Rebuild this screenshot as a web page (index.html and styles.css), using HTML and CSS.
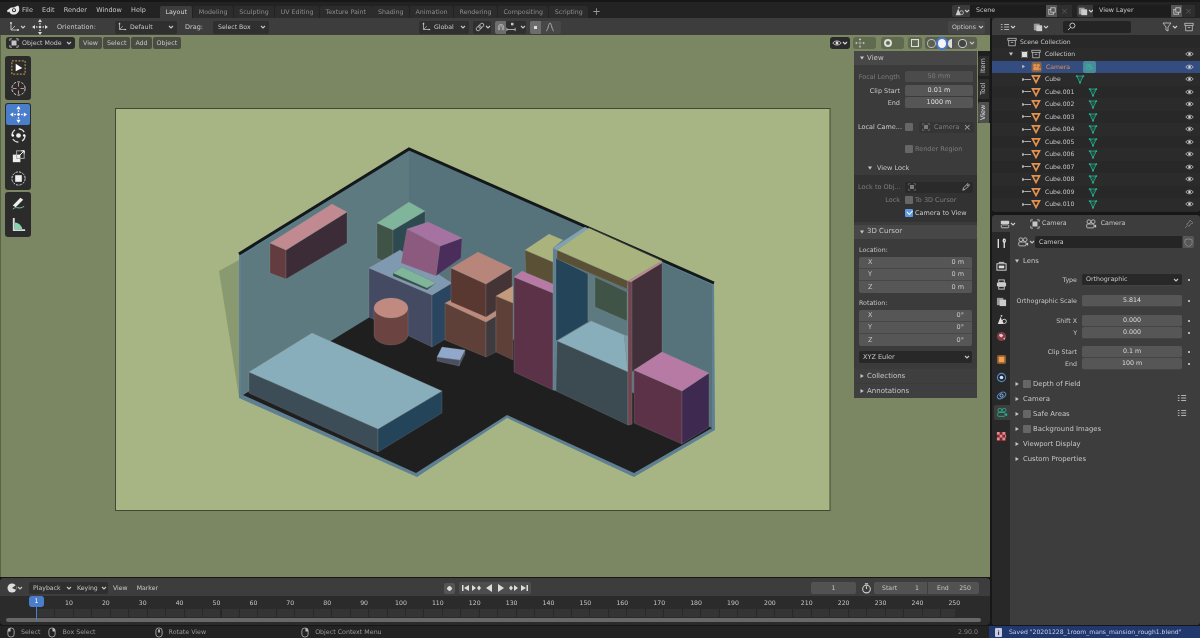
FILE: index.html
```html
<!DOCTYPE html>
<html lang="en">
<head>
<meta charset="utf-8">
<title>Blender</title>
<link rel="stylesheet" href="styles.css">
</head>
<body>
<svg class="defs" width="0" height="0" aria-hidden="true">
  <symbol id="logo" viewBox="0 0 14 12"><path d="M1 6.500 5 3.600 3 3.500h4.600L12 1.600c1 1 1.500 2.600 1.200 4.400-.4 2.400-2.400 4.400-5 4.600C5.600 10.800 3.700 9.400 3.300 7.500L1.800 8.600Z" fill="#e8e8e8"/><circle cx="8" cy="6.200" r="2" fill="#232323"/><circle cx="8" cy="6.200" r="1.100" fill="#e8e8e8"/></symbol>
  <symbol id="chev" viewBox="0 0 6 6"><path d="M1 2 3 4 5 2" fill="none" stroke="currentColor" stroke-width="1.100"/></symbol>
  <symbol id="trid" viewBox="0 0 6 6"><path d="M1 1.500H5L3 4.800Z" fill="currentColor"/></symbol>
  <symbol id="trir" viewBox="0 0 6 6"><path d="M1.500 1 4.800 3 1.500 5Z" fill="currentColor"/></symbol>
  <symbol id="mesh" viewBox="0 0 12 12"><path d="M1.800 2.300H10.200L6 10.200Z" fill="none" stroke="#e2924f" stroke-width="2"/></symbol>
  <symbol id="meshd" viewBox="0 0 12 12"><path d="M2 2.500H10L6 10.500Z" fill="none" stroke="#25b592" stroke-width="1"/><path d="M2 2.500 6 5.500 10 2.500M6 5.500V10.500" fill="none" stroke="#25b592" stroke-width=".5"/><circle cx="2" cy="2.500" r="1.100" fill="#25b592"/><circle cx="10" cy="2.500" r="1.100" fill="#25b592"/><circle cx="6" cy="10.500" r="1.100" fill="#25b592"/></symbol>
  <symbol id="cam" viewBox="0 0 14 12"><circle cx="4.500" cy="3.300" r="2.200" fill="none" stroke="currentColor"/><circle cx="9.500" cy="3.300" r="2.200" fill="none" stroke="currentColor"/><rect x="2" y="6" width="8.500" height="4.500" rx="1" fill="none" stroke="currentColor"/><path d="M10.500 8 13 6.500V10.500L10.500 9Z" fill="currentColor"/></symbol>
  <symbol id="camo" viewBox="0 0 12 12"><rect width="12" height="12" rx="2" fill="#8a6446"/><circle cx="4" cy="4" r="2" fill="#e2924f"/><circle cx="8" cy="4" r="2" fill="#e2924f"/><rect x="2" y="6" width="7" height="4" rx="1" fill="#e2924f"/><path d="M9 8 11 6.500V10L9 9Z" fill="#e2924f"/></symbol>
  <symbol id="eye" viewBox="0 0 12 10"><path d="M1 5C3 1.800 9 1.800 11 5 9 8.200 3 8.200 1 5Z" fill="none" stroke="currentColor"/><circle cx="6" cy="5" r="1.800" fill="currentColor"/></symbol>
  <symbol id="coll" viewBox="0 0 12 12"><rect x="1" y="1.500" width="10" height="2.500" fill="none" stroke="currentColor" stroke-width=".9"/><path d="M2 4V10.500H10V4M4.500 6.500H7.500" fill="none" stroke="currentColor" stroke-width=".9"/></symbol>
  <symbol id="mouse" viewBox="0 0 9 12"><rect x="1" y="1" width="7" height="10" rx="3" fill="none" stroke="currentColor" stroke-width=".9"/><path d="M1 5V4a3 3 0 0 1 3-3V5Z" fill="currentColor"/></symbol>
  <symbol id="mousem" viewBox="0 0 9 12"><rect x="1" y="1" width="7" height="10" rx="3" fill="none" stroke="currentColor" stroke-width=".9"/><rect x="3.500" y="2.500" width="2" height="3.500" fill="currentColor"/></symbol>
  <symbol id="mouser" viewBox="0 0 9 12"><rect x="1" y="1" width="7" height="10" rx="3" fill="none" stroke="currentColor" stroke-width=".9"/><path d="M8 5V4a3 3 0 0 0-3-3V5Z" fill="currentColor"/></symbol>
  <symbol id="move" viewBox="0 0 16 16"><g fill="currentColor"><path d="M8 0 10 3H6ZM8 16 6 13H10ZM0 8 3 6V10ZM16 8 13 10V6Z"/><circle cx="8" cy="8" r="1.300"/><rect x="7.400" y="4" width="1.200" height="1.500"/><rect x="7.400" y="10.500" width="1.200" height="1.500"/><rect x="4" y="7.400" width="1.500" height="1.200"/><rect x="10.500" y="7.400" width="1.500" height="1.200"/></g></symbol>
  <symbol id="cube" viewBox="0 0 12 12"><rect x="3" y="3" width="6" height="6" fill="currentColor"/><path d="M1 3.500V1H3.500M8.500 1H11V3.500M11 8.500V11H8.500M3.500 11H1V8.500" fill="none" stroke="currentColor"/></symbol>
  <symbol id="axis" viewBox="0 0 12 12"><path d="M3 1V9H11" fill="none" stroke="currentColor" stroke-width=".9"/><path d="M3 9 7 5" fill="none" stroke="currentColor" stroke-width=".8"/><circle cx="3" cy="2" r="1" fill="currentColor"/><circle cx="10" cy="9" r="1" fill="currentColor"/></symbol>
  <symbol id="dots" viewBox="0 0 12 12"><path d="M5 3H11M5 6H11M5 9H11M1 3H3M1 6H3M1 9H3" stroke="currentColor" fill="none" stroke-width="1"/></symbol>
  <symbol id="link" viewBox="0 0 12 12"><ellipse cx="4.500" cy="7.500" rx="3.500" ry="2.300" fill="none" stroke="currentColor" transform="rotate(-45 4.500 7.500)"/><ellipse cx="7.500" cy="4.500" rx="3.500" ry="2.300" fill="none" stroke="currentColor" transform="rotate(-45 7.500 4.500)"/></symbol>
  <symbol id="mag" viewBox="0 0 12 12"><path d="M2 10V6a4 4 0 0 1 8 0V10H8V6a2 2 0 0 0-4 0V10Z" fill="none" stroke="currentColor"/></symbol>
  <symbol id="snap" viewBox="0 0 12 12"><rect x="6" y="1" width="3" height="3" fill="currentColor"/><path d="M1 9H11M1 7V11M11 7V11" fill="none" stroke="currentColor"/></symbol>
  <symbol id="cpy" viewBox="0 0 10 10"><rect x="1" y="3" width="6" height="6" fill="none" stroke="currentColor"/><rect x="3.500" y="1" width="5.500" height="5.500" fill="#555" stroke="currentColor"/></symbol>
  <symbol id="scn" viewBox="0 0 12 12"><path d="M2 11 5 3 8 11Z" fill="currentColor"/><circle cx="9" cy="8" r="2.300" fill="none" stroke="currentColor"/><circle cx="6" cy="2" r="1" fill="currentColor"/></symbol>
  <symbol id="lay" viewBox="0 0 12 12"><rect x="1" y="2" width="7" height="8" fill="#999"/><rect x="4" y="4" width="7" height="7" fill="#ccc"/></symbol>
  <symbol id="edp" viewBox="0 0 12 12"><rect x="1" y="2" width="10" height="4" rx="1" fill="currentColor"/><rect x="1.500" y="7" width="9" height="3.500" rx="1" fill="none" stroke="currentColor"/></symbol>
  <symbol id="drop" viewBox="0 0 10 10"><path d="M1 9 2 6 6 2 8 4 4 8ZM6 2 7.500 .7 9.300 2.500 8 4" fill="none" stroke="currentColor"/></symbol>
</svg>

<div class="app">
  <header class="topbar">
    <svg class="logo"><use href="#logo"/></svg>
    <nav class="menus"><span>File</span><span>Edit</span><span>Render</span><span>Window</span><span>Help</span></nav>
    <nav class="tabs">
      <span class="tab on">Layout</span><span class="tab">Modeling</span><span class="tab">Sculpting</span><span class="tab">UV Editing</span><span class="tab">Texture Paint</span><span class="tab">Shading</span><span class="tab">Animation</span><span class="tab">Rendering</span><span class="tab">Compositing</span><span class="tab">Scripting</span><span class="plus">+</span>
    </nav>
    <div class="scene-box">
      <span class="sel-ic"><svg class="i10"><use href="#scn"/></svg><svg class="i6"><use href="#chev"/></svg></span>
      <span class="name">Scene</span>
      <span class="copy"><svg class="i8"><use href="#cpy"/></svg></span><span class="cross">×</span>
    </div>
    <div class="scene-box layer-box">
      <span class="sel-ic"><svg class="i10"><use href="#lay"/></svg><svg class="i6"><use href="#chev"/></svg></span>
      <span class="name">View Layer</span>
      <span class="copy"><svg class="i8"><use href="#cpy"/></svg></span><span class="cross">×</span>
    </div>
  </header>

  <div class="work">
    <div class="left">
      <div class="toolbar">
        <span class="tb-ed"><svg class="i12"><use href="#axis"/></svg><svg class="i6"><use href="#chev"/></svg></span>
        <svg class="tb-move"><use href="#move"/></svg>
        <span class="tb-orient">Orientation:</span>
        <span class="dd dd-default"><svg class="i10"><use href="#axis"/></svg><span>Default</span><svg class="i6 end"><use href="#chev"/></svg></span>
        <span class="tb-drag">Drag:</span>
        <span class="dd dd-box"><span>Select Box</span><svg class="i6 end"><use href="#chev"/></svg></span>
        <span class="dd dd-global"><svg class="i10"><use href="#axis"/></svg><span>Global</span><svg class="i6 end"><use href="#chev"/></svg></span>
        <span class="dd dd-link"><svg class="i10"><use href="#link"/></svg><svg class="i6 end"><use href="#chev"/></svg></span>
        <span class="dd dd-snap"><span class="snap-mag"><svg class="i8"><use href="#mag"/></svg></span><svg class="i10"><use href="#snap"/></svg><svg class="i6 end"><use href="#chev"/></svg></span>
        <span class="dd dd-prop"><span class="prop-dot"></span><svg class="i10 prop-curve" viewBox="0 0 10 10"><path d="M1 9C3 9 3.500 1 5 1S7 9 9 9" fill="none" stroke="#aaa"/></svg></span>
        <span class="dd dd-opt"><span>Options</span><svg class="i6 end"><use href="#chev"/></svg></span>
      </div>

      <main class="viewport">
        <svg class="scene" viewBox="0 35 990 543">
          <rect x="115.500" y="108.500" width="714.500" height="402" fill="#a6b583" stroke="#3f4a33"/>
          <polygon points="219,271 239,260 239,397" fill="#8a9a70"/>
          <polygon points="239,253 409,148 714,283 715,430 634,477 507,418 417,477 239,398" fill="#5e8092"/>
          <polygon points="241,256 409,150 409,296 241,395" fill="#5d7a80"/>
          <polygon points="409,150 712,285 712,430 409,296" fill="#56727b"/>
          <polygon points="243,395 409,293 712,428 634,473 507,415 416,473" fill="#1f1f1f"/>
          <polyline points="239,254 409,149 714,283" fill="none" stroke="#14181a" stroke-width="3"/>
          <g stroke="#9a9a9a" stroke-opacity=".35" stroke-width=".6">
            <polygon points="270,243 286,250 286,279 270,273" fill="#623c3f"/>
            <polygon points="286,250 347,212 347,243 286,279" fill="#3c2c38"/>
            <polygon points="270,243 332,204 347,212 286,250" fill="#c08a90"/>

            <polygon points="377,223 393,230 393,265 377,258" fill="#3f5346"/>
            <polygon points="393,230 425,211 425,240 393,265" fill="#2c4a50"/>
            <polygon points="377,223 409,202 425,211 393,230" fill="#7fb59a"/>

            <polygon points="369,268 432,295 432,347 369,317" fill="#454a63"/>
            <polygon points="432,295 452,283 452,335 432,347" fill="#2a4560"/>
            <polygon points="369,268 400,250 452,283 432,295" fill="#7f9ab0"/>

            <polygon points="407,229 440,246 436,276 401,263" fill="#8b5a7e"/>
            <polygon points="440,246 462,238 461,258 436,276" fill="#4a2d5a"/>
            <polygon points="407,229 428,222 462,238 440,246" fill="#a672a2"/>
            <polygon points="393,273 402,267 436,283 427,290 393,276" fill="#35504a"/>
            <polygon points="393,273 402,267 436,283 427,288" fill="#7fb59a"/>

            <path d="M374 308V335A17 10 0 0 0 408 335V308Z" fill="#6b4340"/>
            <ellipse cx="391" cy="308" rx="17" ry="10" fill="#c08a80"/>

            <polygon points="249,372 378,429 378,452 249,393" fill="#3c4d58"/>
            <polygon points="378,429 442,391 442,413 378,452" fill="#24445a"/>
            <polygon points="249,372 312,333 442,391 378,429" fill="#88aebb"/>

            <polygon points="437,357 460,360 459,366 437,361" fill="#4a5060"/>
            <polygon points="460,360 465,350 465,354 459,366" fill="#4a5060"/>
            <polygon points="442,347 465,350 460,360 437,357" fill="#8fa8cc"/>

            <polygon points="445,303 486,322 486,357 445,340" fill="#5e4038"/>
            <polygon points="486,322 496,316 496,352 486,357" fill="#3f3a3e"/>
            <polygon points="445,303 451,300 486,317 496,311 496,316 486,322" fill="#c08a7a"/>
            <polygon points="451,268 486,284 486,317 451,302" fill="#5a3832"/>
            <polygon points="486,284 512,268 512,300 486,317" fill="#453436"/>
            <polygon points="451,268 478,252 512,268 486,284" fill="#b8857a"/>

            <polygon points="496,296 513,303 513,360 496,352" fill="#5e4038"/>
            <polygon points="496,296 513,286 513,303" fill="#c49a7c"/>

            <polygon points="525,250 553,262 553,290 526,276" fill="#5a5035"/>
            <polygon points="525,250 549,234 563,240 553,248 553,262" fill="#aab37c"/>
            <polygon points="514,277 553,293 553,390 514,372" fill="#5c3248"/>
            <polygon points="514,277 522,271 553,284 553,293" fill="#b67aa5"/>

            <polygon points="553,248 557,250 557,391 553,390" fill="#5e8092"/>
            <polygon points="553,248 585,227 589,229 557,250" fill="#7fa3b5"/>
            <polygon points="556,258 588,274 588,322 556,341" fill="#24445a"/>
            <polygon points="588,274 628,292 628,338 588,320" fill="#5d7a80"/>
            <polygon points="595,277 627,292 627,321 595,307" fill="#3f5346"/>
            <polygon points="557,341 591,321 624,335 628,372" fill="#88aebb"/>
            <polygon points="624,335 628,336 628,372" fill="#7a9da9"/>
            <polygon points="557,341 628,372 628,425 556,391" fill="#3c4a52"/>
            <polygon points="557,250 628,281 627,289 557,259" fill="#5a5035"/>
            <polygon points="628,281 662,261 662,352 632,372 632,424 628,425" fill="#41303a"/>
            <polygon points="628,281 632,279 632,424 628,425" fill="#6f4650"/>
            <polygon points="557,250 589,228 662,261 628,281" fill="#a9b37d"/>
            <polygon points="628,281 662,261 662,263 631,282" fill="#c08a90"/>

            <polygon points="634,370 682,391 682,444 634,423" fill="#5c3248"/>
            <polygon points="682,391 709,373 709,427 682,444" fill="#3e2a50"/>
            <polygon points="634,370 662,352 709,373 682,391" fill="#b67aa5"/>
          </g>
          <line x1="589" y1="227.500" x2="662" y2="260.500" stroke="#3a4238" stroke-width=".8"/>
        </svg>

        <div class="vp-header">
          <span class="mode"><svg class="i10"><use href="#cube"/></svg><span>Object Mode</span><svg class="i6 end"><use href="#chev"/></svg></span>
          <div class="vp-menu"><span>View</span><span>Select</span><span>Add</span><span>Object</span></div>
        </div>

        <div class="gizmos">
          <span class="gz gz-view"><svg class="i10"><use href="#eye"/></svg><svg class="i6"><use href="#chev"/></svg></span>
          <span class="gz gz-gizmo"><svg class="i10"><use href="#move"/></svg></span>
          <span class="gz gz-over"><span class="over-ball"></span></span>
          <span class="gz gz-xray"><span class="xray"></span></span>
          <span class="gz gz-shade"><span class="ball wire"></span><span class="ball solid"></span><span class="ball mat"></span><span class="ball rend"></span><svg class="i6"><use href="#chev"/></svg></span>
        </div>

        <div class="tools">
          <div class="tool-group">
            <span class="tool"><svg viewBox="0 0 18 18"><rect x="2" y="2" width="14" height="14" fill="none" stroke="#d8b05c" stroke-dasharray="2 1.500"/><path d="M6 5 13 9.500 6 13Z" fill="#fff"/></svg></span>
            <span class="tool"><svg viewBox="0 0 18 18"><circle cx="9" cy="9" r="7" fill="none" stroke="#ddd" stroke-dasharray="3 1.500"/><path d="M9 3V7M9 11V15M3 9H7M11 9H15" stroke="#c98" fill="none"/></svg></span>
          </div>
          <div class="tool-group">
            <span class="tool on"><svg viewBox="0 0 16 16"><use href="#move"/></svg></span>
            <span class="tool"><svg viewBox="0 0 18 18"><circle cx="9" cy="9" r="7" fill="none" stroke="#ddd" stroke-width="1.200" stroke-dasharray="7 4"/><circle cx="3" cy="9" r="1.300" fill="#fff"/><circle cx="15" cy="9" r="1.300" fill="#fff"/><circle cx="9" cy="9" r="2.500" fill="#eee"/></svg></span>
            <span class="tool"><svg viewBox="0 0 18 18"><rect x="3" y="7" width="8" height="8" fill="#eee"/><rect x="7" y="3" width="8" height="8" fill="none" stroke="#aaa"/><path d="M10 8 15 3M12 3H15V6" stroke="#fff" fill="none"/></svg></span>
            <span class="tool"><svg viewBox="0 0 18 18"><circle cx="9" cy="9" r="7" fill="none" stroke="#ddd" stroke-dasharray="2.500 1.200"/><rect x="5.500" y="5.500" width="7" height="7" fill="#eee"/></svg></span>
          </div>
          <div class="tool-group">
            <span class="tool"><svg viewBox="0 0 18 18"><path d="M3 11 11 3 14 5 6 13Z" fill="#eee"/><path d="M3 15C7 11 9 16 15 12" fill="none" stroke="#7fc7a5"/></svg></span>
            <span class="tool"><svg viewBox="0 0 18 18"><path d="M4 2V15H16" fill="none" stroke="#ddd" stroke-width="2"/><path d="M5 14V7A8 8 0 0 1 13 14Z" fill="#86d3b0"/></svg></span>
          </div>
        </div>

        <aside class="npanel">
          <div class="np-main">
            <div class="ph"><svg class="i6"><use href="#trid"/></svg><span>View</span></div>
            <div class="pb pb-view">
              <div class="fr dim"><label>Focal Length</label><span class="fld center">50 mm</span></div>
              <div class="fr fr-gap"><label>Clip Start</label><span class="fld center">0.01 m</span></div>
              <div class="fr"><label>End</label><span class="fld center">1000 m</span></div>
              <div class="fr local"><label>Local Came...</label><span class="cb"></span><span class="obj dim"><svg class="i8"><use href="#cube"/></svg><span>Camera</span><em>×</em></span></div>
              <div class="fr render-r dim"><label></label><span class="chk"><span class="cb"></span>Render Region</span></div>
              <div class="sub-h"><svg class="i6"><use href="#trid"/></svg><span>View Lock</span></div>
              <div class="sub-b">
                <div class="fr dim"><label>Lock to Obj...</label><span class="obj dark"><svg class="i8"><use href="#cube"/></svg><svg class="i8 drop"><use href="#drop"/></svg></span></div>
                <div class="fr dim"><label>Lock</label><span class="chk"><span class="cb"></span>To 3D Cursor</span></div>
                <div class="fr"><label></label><span class="chk"><span class="cb on"></span>Camera to View</span></div>
              </div>
            </div>
            <div class="ph ph-cursor"><svg class="i6"><use href="#trid"/></svg><span>3D Cursor</span></div>
            <div class="pb pb-cursor">
              <div class="cap">Location:</div>
              <div class="vec"><span><b>X</b><i>0 m</i></span><span><b>Y</b><i>0 m</i></span><span><b>Z</b><i>0 m</i></span></div>
              <div class="cap cap2">Rotation:</div>
              <div class="vec"><span><b>X</b><i>0°</i></span><span><b>Y</b><i>0°</i></span><span><b>Z</b><i>0°</i></span></div>
              <div class="euler"><span>XYZ Euler</span><svg class="i6"><use href="#chev"/></svg></div>
            </div>
            <div class="ph ph-col"><svg class="i6"><use href="#trir"/></svg><span>Collections</span></div>
            <div class="ph ph-ann"><svg class="i6"><use href="#trir"/></svg><span>Annotations</span></div>
          </div>
          <div class="np-tabs"><span>Item</span><span class="tool-tab">Tool</span><span class="view-tab">View</span></div>
        </aside>
      </main>

      <section class="timeline">
        <div class="tl-head">
          <span class="tl-ed"><svg class="i10" viewBox="0 0 10 10"><circle cx="5" cy="5" r="4.500" fill="#ddd"/><path d="M5 5 9 2 9.500 7Z" fill="#3d3d3d"/></svg><svg class="i6"><use href="#chev"/></svg></span>
          <span class="tl-dd tl-play">Playback<svg class="i6"><use href="#chev"/></svg></span>
          <span class="tl-dd tl-key">Keying<svg class="i6"><use href="#chev"/></svg></span>
          <span class="tl-menu">View</span><span class="tl-menu tl-marker">Marker</span>
          <div class="tl-ctrl">
            <span class="rec"></span>
            <span class="ctrl">
              <svg viewBox="0 0 10 10"><path d="M2 2H3.500V8H2ZM9 2V8L4 5Z" fill="#ddd"/></svg>
              <svg viewBox="0 0 10 10"><path d="M0 2V8L4 5ZM5 5 7 2.500 9 5 7 7.500Z" fill="#ddd"/></svg>
              <svg viewBox="0 0 10 10"><path d="M8 1V9L2 5Z" fill="#ddd"/></svg>
              <svg viewBox="0 0 10 10"><path d="M2 1V9L8 5Z" fill="#ddd"/></svg>
              <svg viewBox="0 0 10 10"><path d="M1 5 3 2.500 5 5 3 7.500ZM6 2V8L10 5Z" fill="#ddd"/></svg>
              <svg viewBox="0 0 10 10"><path d="M1 2V8L6 5ZM6.500 2H8V8H6.500Z" fill="#ddd"/></svg>
            </span>
          </div>
          <div class="tl-range">
            <span class="frame">1</span>
            <svg class="timer" viewBox="0 0 10 10"><circle cx="5" cy="5.500" r="3.500" fill="none" stroke="#ccc"/><path d="M3.500 .8H6.500M5 3V5.500" stroke="#ccc" fill="none"/></svg>
            <span class="rng rng-s"><b>Start</b><i>1</i></span><span class="rng rng-e"><b>End</b><i>250</i></span>
          </div>
        </div>
        <div class="ruler">
          <span class="cur">1</span>
          <span>10</span><span>20</span><span>30</span><span>40</span><span>50</span><span>60</span><span>70</span><span>80</span><span>90</span><span>100</span><span>110</span><span>120</span><span>130</span><span>140</span><span>150</span><span>160</span><span>170</span><span>180</span><span>190</span><span>200</span><span>210</span><span>220</span><span>230</span><span>240</span><span>250</span>
        </div>
        <div class="track"><span class="cur-line"></span></div>
        <div class="scroll"><span></span></div>
      </section>
    </div>

    <div class="right">
      <section class="outliner">
        <div class="ol-head">
          <span class="ol-ed"><svg class="i10"><use href="#dots"/></svg><svg class="i6"><use href="#chev"/></svg></span>
          <span class="ol-ed ol-ed2"><svg class="i10"><use href="#lay"/></svg><svg class="i6"><use href="#chev"/></svg></span>
          <span class="search"><svg viewBox="0 0 10 10"><circle cx="6" cy="4" r="2.800" fill="none" stroke="#ccc"/><path d="M4 6 1 9" stroke="#ccc"/></svg></span>
          <span class="filter"><svg class="i10" viewBox="0 0 10 10"><path d="M1 1H9L6 5V9L4 8V5Z" fill="none" stroke="#ccc" stroke-width=".8"/></svg><svg class="i6"><use href="#chev"/></svg></span>
          <span class="newc"><svg class="i10"><use href="#coll"/></svg></span>
        </div>
        <div class="ol-list">
          <div class="row r-scene"><svg class="i10"><use href="#coll"/></svg><span>Scene Collection</span></div>
          <div class="row r-coll alt"><svg class="i6"><use href="#trid"/></svg><span class="cb on2"></span><svg class="i10"><use href="#coll"/></svg><span>Collection</span><svg class="eye"><use href="#eye"/></svg></div>
          <div class="row item sel"><svg class="i6"><use href="#trir"/></svg><svg class="oi"><use href="#camo"/></svg><span class="t-cam">Camera</span><span class="cam-data"><svg class="i8"><use href="#cam"/></svg></span><svg class="eye"><use href="#eye"/></svg></div>
          <div class="row item alt"><svg class="i6"><use href="#trir"/></svg><i class="ln"></i><svg class="oi"><use href="#mesh"/></svg><span>Cube</span><svg class="gi"><use href="#meshd"/></svg><svg class="eye"><use href="#eye"/></svg></div>
          <div class="row item"><svg class="i6"><use href="#trir"/></svg><i class="ln"></i><svg class="oi"><use href="#mesh"/></svg><span>Cube.001</span><svg class="gi"><use href="#meshd"/></svg><svg class="eye"><use href="#eye"/></svg></div>
          <div class="row item alt"><svg class="i6"><use href="#trir"/></svg><i class="ln"></i><svg class="oi"><use href="#mesh"/></svg><span>Cube.002</span><svg class="gi"><use href="#meshd"/></svg><svg class="eye"><use href="#eye"/></svg></div>
          <div class="row item"><svg class="i6"><use href="#trir"/></svg><i class="ln"></i><svg class="oi"><use href="#mesh"/></svg><span>Cube.003</span><svg class="gi"><use href="#meshd"/></svg><svg class="eye"><use href="#eye"/></svg></div>
          <div class="row item alt"><svg class="i6"><use href="#trir"/></svg><i class="ln"></i><svg class="oi"><use href="#mesh"/></svg><span>Cube.004</span><svg class="gi"><use href="#meshd"/></svg><svg class="eye"><use href="#eye"/></svg></div>
          <div class="row item"><svg class="i6"><use href="#trir"/></svg><i class="ln"></i><svg class="oi"><use href="#mesh"/></svg><span>Cube.005</span><svg class="gi"><use href="#meshd"/></svg><svg class="eye"><use href="#eye"/></svg></div>
          <div class="row item alt"><svg class="i6"><use href="#trir"/></svg><i class="ln"></i><svg class="oi"><use href="#mesh"/></svg><span>Cube.006</span><svg class="gi"><use href="#meshd"/></svg><svg class="eye"><use href="#eye"/></svg></div>
          <div class="row item"><svg class="i6"><use href="#trir"/></svg><i class="ln"></i><svg class="oi"><use href="#mesh"/></svg><span>Cube.007</span><svg class="gi"><use href="#meshd"/></svg><svg class="eye"><use href="#eye"/></svg></div>
          <div class="row item alt"><svg class="i6"><use href="#trir"/></svg><i class="ln"></i><svg class="oi"><use href="#mesh"/></svg><span>Cube.008</span><svg class="gi"><use href="#meshd"/></svg><svg class="eye"><use href="#eye"/></svg></div>
          <div class="row item"><svg class="i6"><use href="#trir"/></svg><i class="ln"></i><svg class="oi"><use href="#mesh"/></svg><span>Cube.009</span><svg class="gi"><use href="#meshd"/></svg><svg class="eye"><use href="#eye"/></svg></div>
          <div class="row item alt"><svg class="i6"><use href="#trir"/></svg><i class="ln"></i><svg class="oi"><use href="#mesh"/></svg><span>Cube.010</span><svg class="gi"><use href="#meshd"/></svg><svg class="eye"><use href="#eye"/></svg></div>
        </div>
      </section>

      <section class="props">
        <div class="pr-head">
          <span class="ol-ed pr-ed"><svg class="i10"><use href="#edp"/></svg><svg class="i6"><use href="#chev"/></svg></span>
          <svg class="i10 pr-ic1"><use href="#cube"/></svg><span>Camera</span>
          <svg class="i12 pr-ic2"><use href="#cam"/></svg><span>Camera</span>
          <svg class="i10 pin" viewBox="0 0 10 10"><path d="M6 1 9 4 6.500 5 5 7.500 2.500 5 5 3.500ZM3.500 6.500 1 9" fill="none" stroke="#777"/></svg>
        </div>
        <div class="pr-body">
          <div class="pr-tabs">
            <svg class="ptab p-tool" viewBox="0 0 12 12"><path d="M2.500 1V11M9 1C7.500 2 7.500 4 9 5V11M9 5C10.500 4 10.500 2 9 1" fill="none" stroke="#ddd" stroke-width="1.500"/></svg>
            <svg class="ptab" viewBox="0 0 12 12"><rect x="1" y="3" width="10" height="7" fill="none" stroke="#ddd"/><rect x="3" y="5" width="6" height="3" fill="#ddd"/><path d="M3 1.500H9" stroke="#ddd"/></svg>
            <svg class="ptab" viewBox="0 0 12 12"><rect x="1" y="4" width="10" height="4" fill="#ccc"/><rect x="3" y="1" width="6" height="3" fill="none" stroke="#ccc"/><rect x="3" y="8" width="6" height="3" fill="none" stroke="#ccc"/></svg>
            <svg class="ptab" viewBox="0 0 12 12"><use href="#lay"/></svg>
            <svg class="ptab p-scn" viewBox="0 0 12 12"><use href="#scn"/></svg>
            <svg class="ptab" viewBox="0 0 12 12"><circle cx="6" cy="6" r="5" fill="#8b3a3f"/><path d="M3 4 6 3 8 5 6 7 4 6ZM8 8 10 7 9 10Z" fill="#c9d0da"/></svg>
            <svg class="ptab gap" viewBox="0 0 12 12"><rect x="1" y="1" width="10" height="10" rx="2" fill="#8a5c32"/><rect x="3" y="3" width="6" height="6" fill="#f0a050"/></svg>
            <svg class="ptab" viewBox="0 0 12 12"><circle cx="6" cy="6" r="4.500" fill="none" stroke="#4f8bd0" stroke-width="1.200"/><circle cx="6" cy="6" r="2" fill="#cfe0f5"/></svg>
            <svg class="ptab" viewBox="0 0 12 12"><ellipse cx="6" cy="6" rx="5" ry="3" fill="none" stroke="#4f8bd0" stroke-width="1.200" transform="rotate(-30 6 6)"/><circle cx="6" cy="6" r="1.700" fill="none" stroke="#a8c8ee"/></svg>
            <span class="ptab-on"><svg viewBox="0 0 14 12"><use href="#cam"/></svg></span>
            <svg class="ptab gap" viewBox="0 0 12 12"><rect x="1" y="1" width="10" height="10" fill="#7c2a30"/><path d="M1 1H4V4H1ZM7 1H10V4H7ZM4 4H7V7H4ZM10 4H11V7H10ZM1 7H4V10H1ZM7 7H10V10H7Z" fill="#e08a90"/></svg>
          </div>
          <div class="pr-main">
            <div class="data-row">
              <span class="data-ic"><svg class="i12"><use href="#cam"/></svg><svg class="i6"><use href="#chev"/></svg></span>
              <span class="data-name">Camera</span>
              <span class="data-sh"><svg viewBox="0 0 10 10"><path d="M1 2 5 1 9 2V5C9 7 7 9 5 9.500 3 9 1 7 1 5Z" fill="none" stroke="#888"/></svg></span>
            </div>
            <div class="pp-h lens"><svg class="i6"><use href="#trid"/></svg><span>Lens</span></div>
            <div class="pf type"><label>Type</label><span class="f dark">Orthographic<svg class="i6"><use href="#chev"/></svg></span><i></i></div>
            <div class="pf ortho"><label>Orthographic Scale</label><span class="f">5.814</span><i></i></div>
            <div class="pf shift"><label>Shift X</label><span class="f">0.000</span><i></i></div>
            <div class="pf"><label>Y</label><span class="f">0.000</span><i></i></div>
            <div class="pf clip"><label>Clip Start</label><span class="f">0.1 m</span><i></i></div>
            <div class="pf"><label>End</label><span class="f">100 m</span><i></i></div>
            <div class="pp-list">
              <div class="pp-h"><svg class="i6"><use href="#trir"/></svg><span class="cb"></span><span>Depth of Field</span></div>
              <div class="pp-h"><svg class="i6"><use href="#trir"/></svg><span>Camera</span><svg class="lst"><use href="#dots"/></svg></div>
              <div class="pp-h"><svg class="i6"><use href="#trir"/></svg><span class="cb"></span><span>Safe Areas</span><svg class="lst"><use href="#dots"/></svg></div>
              <div class="pp-h"><svg class="i6"><use href="#trir"/></svg><span class="cb"></span><span>Background Images</span></div>
              <div class="pp-h"><svg class="i6"><use href="#trir"/></svg><span>Viewport Display</span></div>
              <div class="pp-h"><svg class="i6"><use href="#trir"/></svg><span>Custom Properties</span></div>
            </div>
          </div>
        </div>
      </section>
    </div>
  </div>

  <footer class="status">
    <svg class="ms"><use href="#mouse"/></svg><span class="s1">Select</span>
    <svg class="ms m2"><use href="#mouser"/></svg><span class="s2">Box Select</span>
    <svg class="ms m3"><use href="#mousem"/></svg><span class="s2">Rotate View</span>
    <svg class="ms m4"><use href="#mouser"/></svg><span class="s2">Object Context Menu</span>
    <span class="ver">2.90.0</span>
    <span class="report"><b>i</b><span>Saved "20201228_1room_mans_mansion_rough1.blend"</span></span>
  </footer>
</div>
</body>
</html>
```
FILE: styles.css
```css
* { box-sizing: border-box; }
html, body { margin: 0; height: 100%; }
body { background: #fff; overflow: hidden; font: 6.300px/1 "DejaVu Sans", sans-serif; color: #c6c6c6; }
.defs { position: absolute; }
svg { display: block; flex: none; }
i, em { font-style: normal; }
b { font-weight: normal; }
.i6 { width: 6px; height: 6px; }
.i8 { width: 8px; height: 8px; }
.i10 { width: 10px; height: 10px; }
.i12 { width: 12px; height: 12px; }
.end { margin-left: auto; }

.app { height: 638px; padding-top: 2px; display: flex; flex-direction: column; background: #171717; filter: blur(.3px); }

.topbar { height: 16px; flex: none; background: #232323; display: flex; align-items: center; }
.logo { width: 14px; height: 12px; margin-left: 6px; }
.menus { display: flex; margin-left: 2px; gap: 9.200px; font-size: 6.500px; padding-top: 1px; width: 138px; }
.tabs { display: flex; align-self: flex-end; height: 12px; }
.tab { height: 12px; padding: 0 5.500px; margin-right: .9px; display: flex; align-items: center; color: #8c8c8c; background: #2c2c2c; border-radius: 2px 2px 0 0; }
.tab.on { background: #3d3d3d; color: #d5d5d5; }
.plus { margin-left: 3px; font-size: 10px; line-height: 12px; color: #999; }
.scene-box { display: flex; align-items: center; height: 12px; margin-left: auto; margin-top: 1px; width: 120px; }
.layer-box { margin-left: 5px; width: 118px; margin-right: 5px; }
.sel-ic { display: flex; align-items: center; width: 18px; height: 12px; background: #3a3a3a; padding-left: 2px; border-radius: 2px 0 0 2px; color: #ccc; }
.layer-box .sel-ic { width: 16px; padding-left: 1px; }
.name { flex: 1; height: 12px; background: #1d1d1d; display: flex; align-items: center; padding-left: 6px; }
.copy { width: 11px; height: 12px; background: #555; display: flex; align-items: center; justify-content: center; color: #ccc; }
.cross { width: 15px; text-align: center; color: #555; font-size: 9px; line-height: 12px; background: #2e2e2e; }
.layer-box .cross { width: 13px; }

.work { flex: 1; display: flex; min-height: 0; }
.left { width: 990px; flex: none; display: flex; flex-direction: column; }
.right { flex: 1; margin-left: 2px; display: flex; flex-direction: column; gap: 3px; }

.toolbar { height: 17px; flex: none; background: #3d3d3d; display: flex; align-items: center; padding-top: 1px; }
.tb-ed { display: flex; align-items: center; margin-left: 8px; width: 22px; color: #ccc; }
.tb-move { width: 16px; height: 16px; margin-left: 2px; color: #ddd; }
.tb-orient { margin-left: 9px; font-size: 6.500px; width: 38px; }
.dd { height: 13px; display: flex; align-items: center; background: #2f2f2f; border-radius: 2px; padding: 0 3px 0 2px; gap: 3px; font-size: 6.200px; }
.dd-default { margin-left: 20px; width: 62px; }
.tb-drag { margin-left: 8px; width: 16px; font-size: 6.500px; }
.dd-box { margin-left: 12px; width: 56px; padding-left: 5px; }
.dd-global { margin-left: 150px; width: 50px; }
.dd-link { margin-left: 4px; width: 18px; padding: 0 1px 0 2px; gap: 0; }
.dd-snap { margin-left: 4px; width: 31px; gap: 0; padding: 0; }
.snap-mag { width: 11px; height: 13px; background: #6d6d6d; border-radius: 2px 0 0 2px; display: flex; align-items: center; justify-content: center; }
.dd-prop { margin-left: 4px; width: 31px; gap: 4px; padding: 0; background: #474747; }
.prop-dot { width: 11px; height: 13px; background: radial-gradient(circle, #ddd 1.500px, #6d6d6d 2px); border-radius: 2px 0 0 2px; }
.dd-opt { margin-left: auto; margin-right: 5px; width: 37px; padding: 0 2px 0 4px; background: #464646; gap: 2px; }

.viewport { position: relative; flex: 1; min-height: 0; background: #7a8762; overflow: hidden; border-left: 1px solid #586247; }
.scene { position: absolute; left: -1px; top: 0; width: 990px; height: 543px; }

.vp-header { position: absolute; top: 2px; left: 5px; display: flex; gap: 4px; height: 12px; white-space: nowrap; }
.mode { width: 69px; display: flex; align-items: center; gap: 3px; background: #2c2c2c; border-radius: 3px; padding: 0 3px; }
.vp-menu { display: flex; gap: 1px; }
.vp-menu span { padding: 0 4px; display: flex; align-items: center; background: #484c41; border-radius: 2px; }

.gizmos { position: absolute; top: 2px; right: 13px; height: 12px; display: flex; }
.gz { height: 12px; display: flex; align-items: center; border-radius: 3px; }
.gz-view { width: 20px; background: #2a2a2a; padding-left: 2px; margin-right: 3px; color: #ddd; }
.gz-gizmo { width: 23px; background: #5f6a4e; padding-left: 2px; margin-right: 5px; color: #ccc; }
.gz-over { width: 23px; background: #5f6a4e; padding-left: 2px; margin-right: 4px; }
.over-ball { width: 8px; height: 8px; border-radius: 50%; border: 2px solid #ddd; margin-left: 1px; }
.gz-xray { width: 14px; background: #5f6a4e; margin-right: 3px; justify-content: center; }
.xray { width: 8px; height: 8px; border: 1px solid #ddd; box-shadow: -1px 1px 0 #777 inset; }
.gz-shade { width: 52px; background: #5a5f50; padding: 0 2px; gap: 2px; justify-content: space-between; }
.ball { width: 9px; height: 9px; border-radius: 50%; }
.wire { border: 1px solid #bbb; }
.solid { background: #f5f5f5; box-shadow: 0 0 0 2px #4a78c8; }
.mat { background: linear-gradient(90deg, #ddd 50%, #555 50%); }
.rend { background: #444; border: 1px solid #ccc; }

.tools { position: absolute; left: 4px; top: 21px; width: 26px; display: flex; flex-direction: column; gap: 2.500px; }
.tool-group { background: #2b2b2b; border-radius: 3px; padding: 1px; display: flex; flex-direction: column; }
.tool { height: 21.200px; display: flex; align-items: center; justify-content: center; border-radius: 2px; color: #fff; }
.tool svg { width: 17px; height: 17px; }
.tool.on { background: #4a7ecb; }

.npanel { position: absolute; top: 16px; left: 853px; width: 136px; display: flex; font-size: 6.500px; }
.np-main { width: 123px; height: 347px; background: #3b3b3b; display: flex; flex-direction: column; }
.ph { height: 14px; flex: none; background: #474747; display: flex; align-items: center; gap: 2px; padding-left: 5px; font-size: 7px; }
.ph::after, .pp-h::after { content: ""; margin-left: auto; margin-right: 3px; width: 10px; height: 5px; background: radial-gradient(circle, #666 .5px, transparent .7px) 0 0 / 2px 2px; }
.pb { display: flex; flex-direction: column; }
.pb-view { padding-top: 6px; height: 159px; }
.fr { height: 12px; flex: none; display: flex; align-items: center; padding: 0 4px; }
.fr label { width: 42px; text-align: right; margin-right: 5px; white-space: nowrap; flex: none; }
.fld { width: 68px; height: 12px; background: #565656; display: flex; align-items: center; justify-content: center; color: #ddd; }
.fr-gap { margin-top: 2px; }
.fld.center { border-radius: 2px; border-bottom: 1px solid #3b3b3b; }
.dim, .dim label, .dim .chk { color: #7c7c7c; }
.dim .fld { background: #4b4b4b; color: #7c7c7c; }
.cb { width: 8px; height: 8px; flex: none; background: #666; border-radius: 1px; display: block; }
.cb.on { background: #5d9be0; position: relative; }
.cb.on::after { content: ""; position: absolute; left: 1.500px; top: 1px; width: 4px; height: 2.500px; border: solid #fff; border-width: 0 0 1px 1px; transform: rotate(-45deg); }
.local { margin-top: 12px; }
.local .cb { margin-right: 6px; }
.obj { flex: 1; height: 11px; display: flex; align-items: center; gap: 4px; padding: 0 3px; background: #353535; border-radius: 2px; }
.obj em { margin-left: auto; font-size: 9px; color: #aaa; }
.obj.dark { background: #2a2a2a; }
.drop { margin-left: auto; color: #ccc; }
.chk { display: flex; align-items: center; gap: 2px; white-space: nowrap; }
.render-r { margin-top: 10px; }
.sub-h { height: 14px; margin-top: 6px; display: flex; align-items: center; gap: 4px; padding-left: 13px; background: #3b3b3b; }
.sub-b { flex: 1; background: #323232; padding-top: 6px; display: flex; flex-direction: column; gap: 1px; height: 47px; }
.ph-cursor { margin-top: 3px; }
.pb-cursor { padding: 5px 5px 0; height: 130px; }
.cap { height: 12px; display: flex; align-items: center; font-size: 6.300px; }
.cap2 { margin-top: 4px; }
.vec { margin-top: 1px; background: #565656; border-radius: 2px; display: flex; flex-direction: column; }
.vec span { height: 12px; display: flex; align-items: center; justify-content: space-between; padding: 0 8px 0 9px; border-bottom: 1px solid #474747; }
.vec span:last-child { border: 0; }
.euler { margin-top: 5px; height: 12px; background: #282828; border-radius: 2px; display: flex; align-items: center; justify-content: space-between; padding: 0 2px 0 4px; }
.ph-col { margin-top: 2px; background: #3f3f3f; }
.ph-ann { margin-top: 1px; background: #3f3f3f; }
.np-tabs { width: 13px; padding-top: 5px; display: flex; flex-direction: column; align-items: flex-start; gap: 3px; background: #1f1f1f; margin-left: 1px; height: 72px; }
.np-tabs span { width: 11px; height: 20px; writing-mode: vertical-rl; transform: rotate(180deg); display: flex; align-items: center; justify-content: center; background: #2d2d2d; border-radius: 0 2px 2px 0; }
.np-tabs .view-tab { background: #505050; height: 21px; color: #ddd; }

.timeline { height: 47px; flex: none; margin-top: 1px; background: #2b2b2b; display: flex; flex-direction: column; border-radius: 4px; overflow: hidden; position: relative; font-size: 6.200px; }
.tl-head { height: 18px; flex: none; background: #3d3d3d; display: flex; align-items: center; padding-top: 2px; }
.tl-ed { display: flex; align-items: center; margin-left: 7px; width: 20px; }
.tl-dd { height: 12px; background: #2f2f2f; display: flex; align-items: center; padding: 0 1px 0 4px; gap: 2px; justify-content: space-between; }
.tl-play { width: 44px; margin-left: 2px; border-radius: 2px 0 0 2px; }
.tl-key { width: 35px; border-radius: 0 2px 2px 0; }
.tl-menu { margin-left: 5px; }
.tl-marker { margin-left: 9px; }
.tl-ctrl { display: flex; align-items: center; margin-left: 286px; gap: 4px; }
.rec { width: 11px; height: 11px; background: radial-gradient(circle, #ddd 2px, #555 2.500px); border-radius: 2px; }
.ctrl { display: flex; background: #4d4d4d; border-radius: 2px; height: 12px; align-items: center; padding: 0 1px; gap: 2px; }
.ctrl svg { width: 10px; height: 10px; }
.tl-range { margin-left: auto; margin-right: 11px; display: flex; align-items: center; }
.frame { width: 45px; height: 12px; background: #525252; display: flex; align-items: center; justify-content: center; border-radius: 2px; }
.timer { margin: 0 2px 0 5px; width: 11px; height: 11px; }
.rng { height: 12px; background: #525252; display: flex; align-items: center; justify-content: space-between; }
.rng-s { width: 53px; padding: 0 8px 0 8px; border-radius: 2px 0 0 2px; margin-right: 1px; }
.rng-e { width: 51px; padding: 0 8px 0 9px; border-radius: 0 2px 2px 0; }
.ruler { height: 13px; flex: none; display: flex; align-items: center; padding: 1px 0 0 50.500px; position: relative; background: #2b2b2b; }
.ruler span { width: 36.900px; text-align: center; flex: none; }
.ruler .cur { position: absolute; left: 29px; top: 0; width: 15px; height: 11px; display: flex; align-items: center; justify-content: center; background: #4a7ecb; color: #fff; border-radius: 3px; }
.track { height: 8px; margin-left: 36px; width: 919px; flex: none; position: relative; background: #343434 repeating-linear-gradient(90deg, #282828 0 1px, transparent 1px 18.450px); }
.cur-line { position: absolute; left: 0; top: -2px; width: 1px; height: 14px; background: #4a7ecb; }
.scroll { padding: 1px 9px 0 6px; }
.scroll span { display: block; height: 4px; background: #686868; border-radius: 2px; }

.outliner { height: 194px; flex: none; background: #282828; overflow: hidden; border-radius: 0 0 3px 3px; font-size: 6.100px; }
.ol-head { height: 17px; background: #3d3d3d; display: flex; align-items: center; color: #ccc; border-radius: 4px 0 0 0; }
.ol-ed { display: flex; align-items: center; width: 16px; margin-left: 8px; }
.ol-ed2 { margin-left: 17px; }
.search { width: 68px; height: 12px; margin-left: 14px; background: #242424; border-radius: 2px; display: flex; align-items: center; padding-left: 4px; }
.search svg { width: 9px; height: 9px; }
.filter { margin-left: auto; display: flex; align-items: center; }
.newc { margin: 0 3px 0 6px; width: 13px; }
.ol-list { padding-top: .5px; }
.row { height: 12.500px; display: flex; align-items: center; position: relative; }
.row.alt { background: #2b2b2b; }
.r-scene { padding-left: 15px; gap: 3px; }
.r-coll { padding-left: 16px; }
.r-coll .cb { margin: 0 3px 0 7px; background: #ddd; width: 7px; height: 7px; box-shadow: inset 0 0 0 1px #555; }
.r-coll > span:last-of-type { margin-left: 4px; }
.item { padding-left: 29px; }
.item > .i6 { width: 5px; height: 5px; }
.ln { width: 6px; height: 1px; background: #aaa; flex: none; margin-left: -1px; }
.oi { width: 10px; height: 10px; margin-right: 4px; }
.sel .oi { margin-left: 5px; width: 11px; height: 10px; margin-right: 4px; }
.sel { background: #334d80; }
.sel .t-cam { color: #e2924f; }
.cam-data { margin-left: 13px; width: 13px; height: 12px; background: #4b8a9a; display: flex; align-items: center; justify-content: center; color: #35c2a0; border-radius: 2px; }
.gi { width: 10px; height: 10px; margin-left: 14px; }
.eye { width: 9px; height: 8px; position: absolute; right: 6px; top: 2px; color: #d8d8d8; }

.props { flex: 1; display: flex; flex-direction: column; min-height: 0; background: #3d3d3d; border-radius: 3px; overflow: hidden; }
.pr-head { height: 17px; flex: none; display: flex; align-items: center; }
.pr-ed { margin-left: 8px; margin-right: 13px; width: 17px; color: #ccc; }
.pr-ic1 { margin-right: 2px; }
.pr-ic2 { margin: 0 4px 0 18px; }
.pin { margin-left: auto; margin-right: 6px; }
.pr-body { flex: 1; display: flex; min-height: 0; }
.pr-tabs { width: 18px; background: #282828; display: flex; flex-direction: column; align-items: center; padding-top: 6px; gap: 6px; }
.ptab { width: 11px; height: 11px; margin-bottom: .6px; color: #ddd; }
.p-tool { margin-bottom: 6px; }
.gap { margin-top: 5.400px; }
.ptab-on { width: 16px; height: 15px; margin: -2px 0 -1px 2px; background: #3d3d3d; display: flex; align-items: center; justify-content: center; border-radius: 2px 0 0 2px; color: #25b592; }
.ptab-on svg { width: 12px; height: 11px; }
.pr-main { flex: 1; padding-top: 4px; }
.data-row { display: flex; align-items: center; height: 12px; padding-left: 7px; }
.data-ic { display: flex; align-items: center; width: 18px; }
.data-name { width: 147px; height: 12px; background: #252525; display: flex; align-items: center; padding-left: 4px; border-radius: 2px 0 0 2px; }
.data-sh { width: 11px; height: 12px; margin-left: 1px; background: #575757; display: flex; align-items: center; justify-content: center; border-radius: 0 2px 2px 0; }
.data-sh svg { width: 9px; height: 9px; }
.pp-h { height: 15px; display: flex; align-items: center; gap: 3px; padding: 1px 0 0 4px; font-size: 6.850px; position: relative; }
.pp-h .cb { margin-right: -1px; }
.lens { margin-top: 5px; margin-bottom: 6px; }
.pf { height: 12px; display: flex; align-items: center; }
.pf label { width: 67px; text-align: right; margin-right: 5px; white-space: nowrap; }
.pf .f { width: 100px; height: 12px; background: #565656; display: flex; align-items: center; justify-content: center; color: #ddd; border-bottom: 1px solid #444; border-radius: 2px; }
.pf .f.dark { background: #282828; justify-content: space-between; padding: 0 3px 0 4px; color: #c6c6c6; }
.pf i { width: 2px; height: 2px; margin-left: 6px; background: #ddd; border-radius: 50%; }
.ortho { margin-top: 9px; }
.shift { margin-top: 8px; }
.clip { margin-top: 7px; }
.pp-list { margin-top: 6px; }
.lst { width: 10px; height: 10px; position: absolute; right: 13px; top: 2px; color: #ccc; }

.status { height: 12px; flex: none; display: flex; align-items: center; background: #232323; color: #999; margin-top: 1px; }
.ms { width: 8px; height: 11px; margin-left: 7px; color: #bbb; }
.m2 { margin-left: 8px; }
.m3 { margin-left: 59px; }
.m4 { margin-left: 95px; }
.s1 { margin-left: 6px; }
.s2 { margin-left: 6px; }
.ver { margin-left: auto; margin-right: 11px; color: #888; }
.report { width: 211px; height: 12px; background: #20386e; display: flex; align-items: center; color: #c8d0e0; gap: 7px; padding-left: 6px; white-space: nowrap; font-size: 6.100px; }
.report b { width: 7px; height: 9px; background: #ccd; color: #20386e; text-align: center; line-height: 9px; font-weight: bold; border-radius: 1px; }
```
